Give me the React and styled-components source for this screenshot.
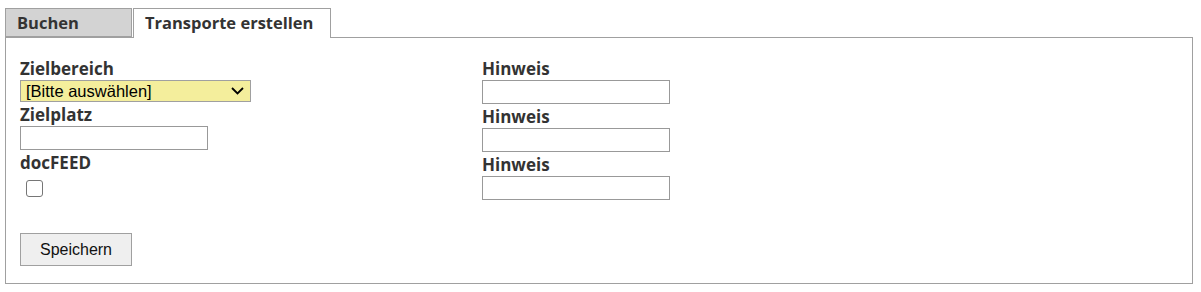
import React, { useState } from "react";
import styled, { createGlobalStyle } from "styled-components";

const GlobalStyle = createGlobalStyle`
  body {
    margin: 8px 8px 0 5px;
    background: #fff;
    font-family: "Open Sans", "Noto Sans", sans-serif;
    color: #333;
  }
`;

const App = () => {
  const [tab, setTab] = useState("transport");
  const [docFeed, setDocFeed] = useState(false);

  return (
    <>
      <GlobalStyle />
      <TabBar>
        <Tab $active={tab === "buchen"} onClick={() => setTab("buchen")}>
          Buchen
        </Tab>
        <Tab $active={tab === "transport"} onClick={() => setTab("transport")}>
          Transporte erstellen
        </Tab>
      </TabBar>

      <Panel>
        <Columns>
          <Column>
            <Label>Zielbereich</Label>
            <SelectWrap>
              <Select defaultValue="">
                <option value="">[Bitte auswählen]</option>
              </Select>
              <Chevron width="13" height="8" viewBox="0 0 13 8">
                <path d="M1 1l5.5 5.5L12 1" fill="none" stroke="#000" strokeWidth="1.8" />
              </Chevron>
            </SelectWrap>
            <Label>Zielplatz</Label>
            <TextInput type="text" />
            <Label>docFEED</Label>
            <Checkbox
              type="checkbox"
              checked={docFeed}
              onChange={(e) => setDocFeed(e.target.checked)}
            />
            <SaveButton>Speichern</SaveButton>
          </Column>

          <Column>
            <Label>Hinweis</Label>
            <TextInput type="text" />
            <Label>Hinweis</Label>
            <TextInput type="text" />
            <Label>Hinweis</Label>
            <TextInput type="text" />
          </Column>
        </Columns>
      </Panel>
    </>
  );
};

// Styled Components
const TabBar = styled.div`
  display: flex;
  gap: 1px;
  align-items: flex-end;
`;

const Tab = styled.div`
  box-sizing: border-box;
  min-width: 127px;
  height: ${(p) => (p.$active ? "30px" : "29px")};
  margin-bottom: ${(p) => (p.$active ? "-1px" : "0")};
  padding: 0 17px 0 11px;
  border: 1px solid #a0a0a0;
  border-bottom: ${(p) => (p.$active ? "none" : "1px solid #a0a0a0")};
  background: ${(p) => (p.$active ? "#fff" : "#d3d3d3")};
  font-weight: 700;
  font-size: 16.5px;
  line-height: 28px;
  color: #333;
  cursor: pointer;
  position: relative;
  z-index: ${(p) => (p.$active ? 1 : 0)};
`;

const Panel = styled.div`
  box-sizing: border-box;
  width: 1188px;
  border: 1px solid #a0a0a0;
  padding: 18px 14px 17px;
`;

const Columns = styled.div`
  display: grid;
  grid-template-columns: 462px 1fr;
`;

const Column = styled.div`
  display: flex;
  flex-direction: column;
  align-items: flex-start;
`;

const Label = styled.label`
  display: block;
  box-sizing: border-box;
  height: 24px;
  padding-top: 1px;
  font-weight: 700;
  font-size: 17px;
  line-height: 24px;
  color: #333;
`;

const SelectWrap = styled.div`
  position: relative;
  width: 231px;
  height: 22px;
`;

const Select = styled.select`
  appearance: none;
  box-sizing: border-box;
  width: 100%;
  height: 22px;
  margin: 0;
  padding: 0 0 0 5px;
  border: 1px solid #a0a0a0;
  border-radius: 0;
  background: #f4ee9c;
  font-family: "Liberation Sans", Arial, sans-serif;
  font-size: 16.5px;
  color: #000;
  outline: none;
`;

const Chevron = styled.svg`
  position: absolute;
  right: 7px;
  top: 7px;
  pointer-events: none;
`;

const TextInput = styled.input`
  box-sizing: border-box;
  width: 188px;
  height: 24px;
  margin: 0;
  padding: 0 4px;
  border: 1px solid #999;
  border-radius: 0;
  font-family: "Liberation Sans", Arial, sans-serif;
  font-size: 15px;
  outline: none;
`;

const Checkbox = styled.input`
  appearance: none;
  box-sizing: border-box;
  width: 17px;
  height: 17px;
  margin: 6px 0 0 6px;
  border: 1px solid #767676;
  border-radius: 3px;
  background: #fff;
  cursor: pointer;

  &:checked {
    background: #0075ff;
    border-color: #0075ff;
  }
`;

const SaveButton = styled.button`
  box-sizing: border-box;
  width: 112px;
  height: 33px;
  margin-top: 36px;
  border: 1px solid #a0a0a0;
  border-radius: 0;
  background: #efefef;
  font-family: "Liberation Sans", Arial, sans-serif;
  font-size: 16px;
  color: #111;
  cursor: pointer;

  &:hover {
    background: #e5e5e5;
  }
`;

export default App;
